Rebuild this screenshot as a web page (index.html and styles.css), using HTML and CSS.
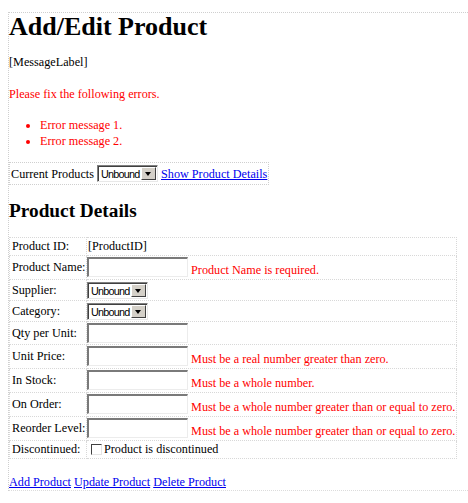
FILE: index.html
```html
<!DOCTYPE html>
<html>
<head>
<meta charset="utf-8">
<title>Add/Edit Product</title>
<link rel="stylesheet" href="styles.css">
</head>
<body>
<div class="form">
  <h1 class="title">Add/Edit Product</h1>
  <p class="msg">[MessageLabel]</p>
  <div class="summary">
    <p class="summary-head">Please fix the following errors.</p>
    <ul class="summary-list">
      <li>Error message 1.</li>
      <li>Error message 2.</li>
    </ul>
  </div>
  <div class="current">Current Products <span class="select"><span class="select-text">Unbound</span><span class="select-btn"><span class="tri"></span></span></span> <a href="#">Show Product Details</a></div>
  <h2 class="subtitle">Product Details</h2>
  <table class="details">
    <tr class="r-id"><td class="lbl">Product ID:</td><td class="val">[ProductID]</td></tr>
    <tr><td class="lbl">Product Name:</td><td class="val"><span class="tb"></span> <span class="err">Product Name is required.</span></td></tr>
    <tr class="r-sel"><td class="lbl">Supplier:</td><td class="val"><span class="select"><span class="select-text">Unbound</span><span class="select-btn"><span class="tri"></span></span></span></td></tr>
    <tr class="r-sel"><td class="lbl">Category:</td><td class="val"><span class="select"><span class="select-text">Unbound</span><span class="select-btn"><span class="tri"></span></span></span></td></tr>
    <tr class="r-plain"><td class="lbl">Qty per Unit:</td><td class="val"><span class="tb"></span></td></tr>
    <tr><td class="lbl">Unit Price:</td><td class="val"><span class="tb"></span> <span class="err">Must be a real number greater than zero.</span></td></tr>
    <tr><td class="lbl">In Stock:</td><td class="val"><span class="tb"></span> <span class="err">Must be a whole number.</span></td></tr>
    <tr><td class="lbl">On Order:</td><td class="val"><span class="tb"></span> <span class="err">Must be a whole number greater than or equal to zero.</span></td></tr>
    <tr><td class="lbl">Reorder Level:</td><td class="val"><span class="tb"></span> <span class="err">Must be a whole number greater than or equal to zero.</span></td></tr>
    <tr class="r-chk"><td class="lbl">Discontinued:</td><td class="val"><span class="chk"></span>Product is discontinued</td></tr>
  </table>
  <div class="links"><a href="#">Add Product</a> <a href="#">Update Product</a> <a href="#">Delete Product</a></div>
</div>
</body>
</html>
```

FILE: styles.css
```css
html, body {
  margin: 0;
  padding: 0;
  background: #ffffff;
}
body {
  font-family: "Liberation Serif", "Times New Roman", serif;
  font-size: 12.2px;
  color: #000000;
}
.form {
  margin: 12px 0 0 8px;
  border-top: 1px dotted #cfcfcf;
  border-left: 1px dotted #cfcfcf;
}
.title {
  font-size: 26px;
  font-weight: bold;
  margin: 0;
  line-height: 28px;
}
.msg {
  margin: 14px 0 0 0;
  line-height: 15px;
}
.summary {
  color: #ff0000;
}
.summary-head {
  margin: 17px 0 0 0;
  line-height: 15px;
}
.summary-list {
  margin: 15px 0 0 0;
  padding-left: 31px;
  line-height: 16px;
}
.current {
  margin-top: 13px;
  width: fit-content;
  border: 1px dotted #cfcfcf;
  padding: 2px 1px 2px 1px;
  line-height: 16px;
  white-space: nowrap;
}
a {
  color: #0000ee;
  text-decoration: underline;
}
.select {
  display: inline-block;
  vertical-align: baseline;
  height: 17px;
  box-sizing: border-box;
  border-top: 1px solid #808080;
  border-left: 1px solid #808080;
  border-bottom: 1px solid #e8e8e8;
  border-right: 1px solid #e8e8e8;
  box-shadow: inset 1px 1px 0 #404040;
  background: #ffffff;
  font-family: "Liberation Sans", Arial, sans-serif;
  font-size: 10.8px;
  letter-spacing: -0.75px;
  line-height: 14px;
  white-space: nowrap;
  padding: 1px 0 0 3px;
}
.select-text {
  display: inline-block;
  vertical-align: baseline;
  width: 38px;
  margin-right: 2px;
}
.select-btn {
  display: inline-block;
  vertical-align: top;
  width: 15px;
  height: 13px;
  margin-right: 1px;
  box-sizing: border-box;
  background: #d4d0c8;
  border-top: 1px solid #ffffff;
  border-left: 1px solid #ffffff;
  border-right: 1px solid #404040;
  border-bottom: 1px solid #404040;
  position: relative;
}
.tri {
  position: absolute;
  left: 3px;
  top: 4px;
  width: 0;
  height: 0;
  border-left: 3.5px solid transparent;
  border-right: 3.5px solid transparent;
  border-top: 4px solid #000000;
}
.subtitle {
  font-size: 19.3px;
  font-weight: bold;
  margin: 15px 0 0 0;
  line-height: 22px;
}
.details {
  margin-top: 15px;
  border-collapse: collapse;
  width: 448px;
  border: 1px dotted #cfcfcf;
}
.details td {
  border: 1px dotted #d8d8d8;
  line-height: 15px;
  vertical-align: middle;
  white-space: nowrap;
}
.details td.lbl {
  padding: 1px 0 1px 2px;
  width: 74px;
}
.details td.val {
  padding: 1px 0 1px 0;
}
.details .r-sel td {
  padding-top: 2px;
  padding-bottom: 1px;
}
.details .r-plain td {
  padding-bottom: 0;
}
.r-id td.val {
  padding-left: 1px;
}
.tb {
  display: inline-block;
  vertical-align: -3px;
  width: 101px;
  height: 20px;
  box-sizing: border-box;
  border-top: 2px solid #7a7a7a;
  border-left: 2px solid #7a7a7a;
  border-bottom: 1px solid #ececec;
  border-right: 1px solid #ececec;
  background: #ffffff;
}
.err {
  color: #ff0000;
}
.chk {
  display: inline-block;
  width: 11px;
  height: 11px;
  box-sizing: border-box;
  border-top: 1px solid #404040;
  border-left: 1px solid #404040;
  border-bottom: 1px solid #e4e4e4;
  border-right: 1px solid #e4e4e4;
  margin: 0 2px 0 4px;
  vertical-align: -2px;
}
.links {
  margin-top: 15px;
  line-height: 16px;
  border-bottom: 1px dotted #dcdcdc;
}
```
